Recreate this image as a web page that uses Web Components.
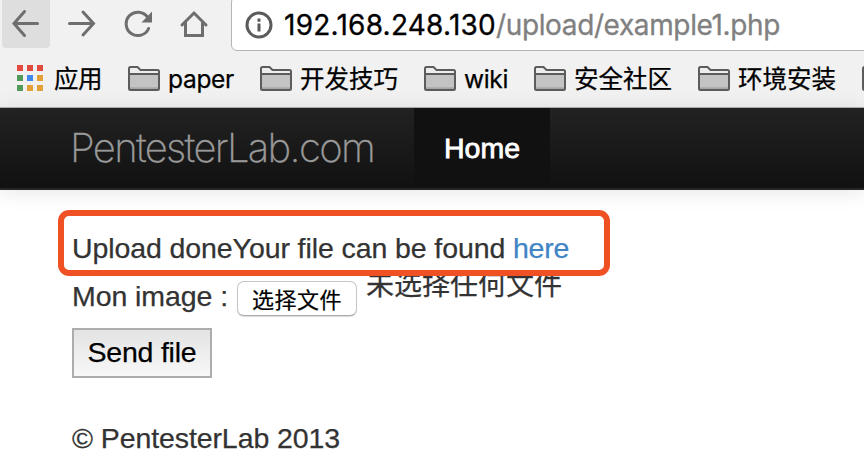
<!DOCTYPE html>
<html lang="zh">
<head>
<meta charset="utf-8">
<title>PentesterLab</title>
<style>
html,body{margin:0;height:100%;overflow:hidden;background:#fff}
</style>
</head>
<body>
<lab-page></lab-page>
<script>
// A single line of text whose letter spacing is set so that it is `w` pixels wide.
class FitText extends HTMLElement {
  connectedCallback() {
    this.attachShadow({mode: 'open'}).innerHTML =
      `<style>:host{display:block;white-space:pre;flex:none}span{display:inline-block}</style><span><slot></slot></span>`;
    const w = Number(this.getAttribute('w'));
    if (!w) return;
    const span = this.shadowRoot.querySelector('span');
    const n = [...this.textContent].length;
    span.style.letterSpacing = (w - span.getBoundingClientRect().width) / n + 'px';
    this.style.width = w + 'px';
  }
}

const ICONS = {
  back: `<path d="M25 11.5 14.5 23.5 25 35.5M15 23.5H38" transform="translate(-0.5 0)"/>`,
  forward: `<path d="M27 12 37.500 23.500 27 35M13.500 23.500H36.500"/>`,
  reload: `<path d="M35.700 17.500A11.700 11.700 0 1 0 36.600 28.500"/><path d="M40 11.500V22.500H29.500Z" fill="#6e6e6e" stroke="none"/>`,
  home: `<path d="M14 25 26 13 38 25M17.500 23V35.500H34.500V23" stroke-linejoin="miter"/>`
};
class ToolButton extends HTMLElement {
  connectedCallback() {
    this.attachShadow({mode: 'open'}).innerHTML = `<style>
      :host{display:block;width:48px;height:48px;border-radius:0 0 4px 4px;flex:none}
      :host([active]){background:#dedede}
      svg{display:block;fill:none;stroke:#6e6e6e;stroke-width:3;stroke-linecap:round}
      </style><svg width="48" height="48" viewBox="2 0 48 48">${ICONS[this.getAttribute('icon')]}</svg>`;
  }
}

class AddressBar extends HTMLElement {
  connectedCallback() {
    this.attachShadow({mode: 'open'}).innerHTML = `<style>
      :host{box-sizing:border-box;display:flex;align-items:center;height:55px;width:660px;flex:none;margin-top:-4px;
        padding:2px 0 0 13px;background:#fff;border:1px solid #b5b5b5;border-radius:6px;
        font:28px/36px Inter,sans-serif;color:#000;-webkit-text-stroke:.3px}
      svg{flex:none;margin-right:11px}
      fit-text{margin-top:1px}
      .path{color:#808080}
      </style>
      <svg width="28" height="28" viewBox="0 0 28 28" fill="none" stroke="#5b5b5b" stroke-width="3"><circle cx="14" cy="14" r="12"/><path d="M14 12.500V20.500M14 7.500V10.800"/></svg>
      <fit-text w="212">192.168.248.130</fit-text><fit-text class="path" w="284">/upload/example1.php</fit-text>`;
  }
}

class AppsIcon extends HTMLElement {
  connectedCallback() {
    const c = ['#e24a3f','#e24a3f','#e24a3f','#529a5a','#4289ee','#e2a137','#529a5a','#e2a137','#e2a137'];
    this.attachShadow({mode: 'open'}).innerHTML = `<style>
      :host{display:grid;grid-template-columns:repeat(3,6px);grid-auto-rows:6px;gap:4px;flex:none;margin-bottom:2px}
      </style>` + c.map(x => `<i style="background:${x}"></i>`).join('');
  }
}

class FolderIcon extends HTMLElement {
  connectedCallback() {
    this.attachShadow({mode: 'open'}).innerHTML = `<style>:host,svg{display:block;flex:none}</style>
      <svg width="32" height="25" viewBox="0 0 32 25">
      <path d="M1 22V2.500Q1 1 2.500 1H9.500L12.500 4H29.500Q31 4 31 5.500V22.500Q31 24 29.500 24H2.500Q1 24 1 22.500Z" fill="#ededed"/>
      <path d="M1 8H31V24H1Z" fill="#c3c3c3"/><path d="M1 21.300H31V23H1Z" fill="#a6a6a6"/>
      <path d="M1 8H31M1 22.500V2.500Q1 1 2.500 1H9.500L12.500 4H29.500Q31 4 31 5.500V22.500Q31 24 29.500 24H2.500Q1 24 1 22.500Z" fill="none" stroke="#5c5c5c" stroke-width="2"/>
      </svg>`;
  }
}

class BookmarkItem extends HTMLElement {
  connectedCallback() {
    const icon = this.hasAttribute('apps') ? '<apps-icon></apps-icon>' : '<folder-icon></folder-icon>';
    this.attachShadow({mode: 'open'}).innerHTML = `<style>
      :host{display:flex;align-items:center;gap:8px;flex:none}
      :host([apps]){gap:11px}
      </style>${icon}<slot></slot>`;
  }
}

class BrowserChrome extends HTMLElement {
  connectedCallback() {
    this.attachShadow({mode: 'open'}).innerHTML = `<style>
      :host{box-sizing:border-box;display:block;height:108px;background:#f1f1f1;border-bottom:1px solid #b0b0b0;overflow:hidden}
      .tools{display:flex;gap:8px;padding-left:2px;height:52px}
      address-bar{margin-left:5px}
      .marks{display:flex;align-items:center;height:53px;padding-left:17px;color:#000;
        font:24.5px/36px Inter,"Noto Sans CJK SC",sans-serif;-webkit-text-stroke:.25px #000}
      .marks fit-text{margin-top:1px}
      bookmark-item{margin-right:26px}
      </style>
      <div class="tools"><tool-button icon="back" active></tool-button><tool-button icon="forward"></tool-button>
      <tool-button icon="reload"></tool-button><tool-button icon="home"></tool-button><address-bar></address-bar></div>
      <div class="marks">
      <bookmark-item apps><fit-text w="48">应用</fit-text></bookmark-item>
      <bookmark-item><fit-text w="66">paper</fit-text></bookmark-item>
      <bookmark-item><fit-text w="98">开发技巧</fit-text></bookmark-item>
      <bookmark-item><fit-text w="44">wiki</fit-text></bookmark-item>
      <bookmark-item><fit-text w="98">安全社区</fit-text></bookmark-item>
      <bookmark-item><fit-text w="98">环境安装</fit-text></bookmark-item>
      <folder-icon></folder-icon></div>`;
  }
}

class SiteNav extends HTMLElement {
  connectedCallback() {
    this.attachShadow({mode: 'open'}).innerHTML = `<style>
      :host{box-sizing:border-box;display:flex;height:82px;padding-left:70px;background:linear-gradient(#222,#111);
        border-bottom:2px solid #252525;box-shadow:0 2px 20px rgba(0,0,0,.1)}
      .brand{width:344px;font:200 40px/80px Inter,sans-serif;color:#999;-webkit-text-stroke:.3px #999}
      .item{width:136px;display:flex;justify-content:center;background:#111;color:#fff;
        font:28.5px/80px "Liberation Sans",sans-serif;-webkit-text-stroke:.8px #fff}
      </style><div class="brand"><fit-text w="304">PentesterLab.com</fit-text></div>
      <div class="item"><fit-text w="76">Home</fit-text></div>`;
  }
}

class FilePicker extends HTMLElement {
  connectedCallback() {
    this.attachShadow({mode: 'open'}).innerHTML = `<style>
      :host{display:flex;align-items:flex-start}
      button{box-sizing:border-box;width:120px;height:35px;margin:10px 9px 0 0;padding:0 0 2px;display:flex;align-items:center;justify-content:center;
        border:1px solid #c6c6c6;border-bottom-color:#aaa;border-radius:7px;background:#fff;box-shadow:0 1px 1px rgba(0,0,0,.15);
        font:22px/30px "Noto Sans CJK SC",sans-serif;color:#000;-webkit-text-stroke:.2px #000}
      .state{font:28px/40px "Noto Sans CJK SC",sans-serif;margin-top:-8px;clip-path:inset(10px 0 0 0)}
      </style><button><fit-text w="90">选择文件</fit-text></button><fit-text class="state" w="196">未选择任何文件</fit-text>`;
  }
}

class CalloutBox extends HTMLElement {
  connectedCallback() {
    this.attachShadow({mode: 'open'}).innerHTML = `<style>
      :host{position:absolute;box-sizing:border-box;left:-14px;top:-18px;width:552px;height:66px;
        border:6px solid #ef5024;border-radius:11px;z-index:2}
      </style>`;
  }
}

class LabPage extends HTMLElement {
  connectedCallback() {
    this.attachShadow({mode: 'open'}).innerHTML = `<style>
      :host{display:block;height:474px;overflow:hidden;background:#fff}
      main{padding:38px 0 0 72px;font:28.5px/40px "Liberation Sans",sans-serif;color:#333;-webkit-text-stroke:.25px}
      .msg{position:relative;display:flex;height:40px}
      .msg a{color:#3f85c6}
      .row{display:flex;height:60px;margin-top:3px}
      .row > fit-text{margin:5px 9px 0 0}
      .send{box-sizing:border-box;display:flex;justify-content:center;align-items:center;width:140px;height:50px;padding:0 0 2px;
        margin-top:-3px;border:2px solid #adadad;border-radius:0;background:linear-gradient(#e3e3e3,#f8f8f8);font:28.5px/40px "Liberation Sans",sans-serif;color:#000}
      footer{margin-top:40px}
      </style>
      <browser-chrome></browser-chrome><site-nav></site-nav>
      <main>
      <div class="msg"><fit-text w="441">Upload doneYour file can be found </fit-text><a><fit-text w="56">here</fit-text></a><callout-box></callout-box></div>
      <div class="row"><fit-text w="156">Mon image :</fit-text><file-picker></file-picker></div>
      <button class="send"><fit-text w="109">Send file</fit-text></button>
      <footer><fit-text w="268">© PentesterLab 2013</fit-text></footer>
      </main>`;
  }
}

customElements.define('fit-text', FitText);
customElements.define('tool-button', ToolButton);
customElements.define('address-bar', AddressBar);
customElements.define('apps-icon', AppsIcon);
customElements.define('folder-icon', FolderIcon);
customElements.define('bookmark-item', BookmarkItem);
customElements.define('browser-chrome', BrowserChrome);
customElements.define('site-nav', SiteNav);
customElements.define('file-picker', FilePicker);
customElements.define('callout-box', CalloutBox);
customElements.define('lab-page', LabPage);
</script>
</body>
</html>
